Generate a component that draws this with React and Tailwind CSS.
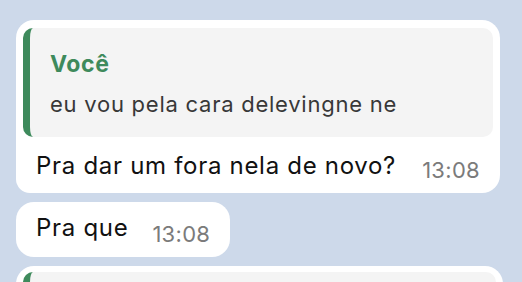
export default function App() {
  return (
    <div
      className="w-[522px] h-[282px] overflow-hidden bg-[#cdd9ea] pt-5 pl-4 flex flex-col gap-[9px]"
      style={{ fontFamily: "Inter, 'Noto Sans', sans-serif" }}
    >
      {/* reply bubble */}
      <div className="w-[484px] shrink-0 bg-white rounded-[18px] rounded-bl-[14px] p-[7px] pt-2">
        <div className="bg-[#f4f4f4] rounded-[10px] border-l-[7px] border-[#3e8a5c] pl-5 pt-[22px] pb-[19px]">
          <div className="text-[23px] leading-[28px] font-bold tracking-[0.6px] text-[#3e8a5c]">Você</div>
          <div className="mt-3 text-[22px] leading-[28px] tracking-[0.75px] text-[#383838]">
            eu vou pela cara delevingne ne
          </div>
        </div>
        <div className="flex items-end justify-between pl-[13px] pr-[13px] pt-[14px] pb-[5px]">
          <span className="text-[24px] leading-[30px] tracking-[0.7px] text-[#111]">Pra dar um fora nela de novo?</span>
          <span className="text-[22px] leading-[22px] tracking-[0.3px] text-[#7b7b7b]">13:08</span>
        </div>
      </div>

      <div className="w-fit shrink-0 bg-white rounded-[18px] flex items-end gap-6 pl-5 pr-[20px] pt-[11px] pb-[14px]">
        <span className="text-[24px] leading-[30px] tracking-[0.7px] text-[#111]">Pra que</span>
        <span className="text-[22px] leading-[22px] tracking-[0.3px] text-[#7b7b7b] -mb-[2px]">13:08</span>
      </div>

      <div className="w-[487px] shrink-0 bg-white rounded-[18px] p-[7px] pt-[6px]">
        <div className="bg-[#f4f4f4] rounded-[10px] border-l-[7px] border-[#3e8a5c] h-[60px]" />
      </div>
    </div>
  );
}
